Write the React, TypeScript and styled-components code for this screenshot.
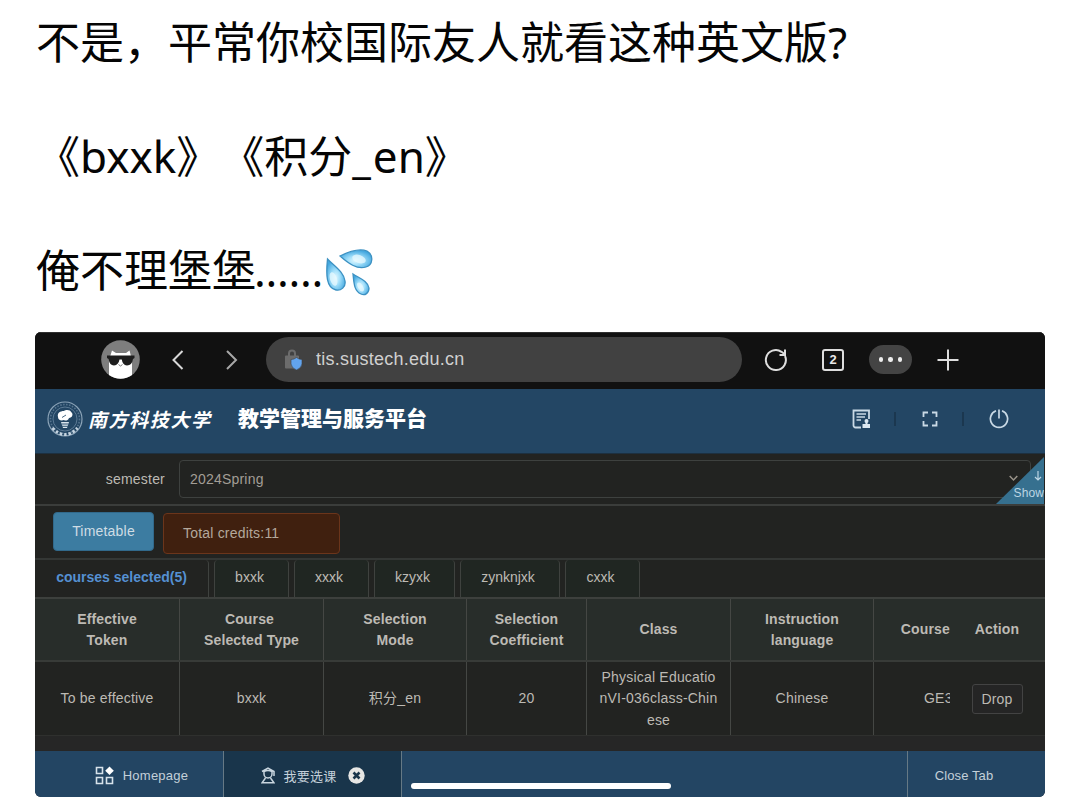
import React from "react";
import styled, { createGlobalStyle } from "styled-components";

const ui = `"Liberation Sans", "Noto Sans CJK SC", sans-serif`;

const Global = createGlobalStyle`
  * { box-sizing: border-box; }
  body { margin: 0; background: #fff; overflow: hidden; }
`;

const Page = styled.main`
  width: 1080px;
  height: 797px;
  overflow: hidden;
  display: flex;
  flex-direction: column;
  background: #fff;
`;

const Post = styled.section`
  height: 332px;
  flex: none;
  padding: 0 0 0 36px;
  font: 44px "Noto Sans", "Noto Sans CJK SC", sans-serif;
  text-spacing-trim: space-all;
  color: #050505;
`;

const PostLine = styled.p<{ $h: number }>`
  margin: 0;
  height: ${(p) => p.$h}px;
  line-height: 84px;
  display: flex;
  white-space: nowrap;
`;

const Underscore = styled.span`
  font-weight: 600;
  letter-spacing: 2px;
`;

const Ellipsis = styled.span`
  margin-left: -2px;
  letter-spacing: -0.3px;
`;

const Drops = styled.svg`
  margin: 20px 0 0 3px;
  flex: none;
`;

const Device = styled.section`
  width: 1010px;
  height: 465px;
  margin-left: 35px;
  flex: none;
  display: flex;
  flex-direction: column;
  border-radius: 6px;
  overflow: hidden;
  background: #262626;
  font-family: ${ui};
  color: #bdbab4;
`;

const BrowserBar = styled.div`
  height: 57px;
  flex: none;
  display: flex;
  align-items: center;
  background: #111;
  padding: 0 0 3px 66px;
  border-top: 1px solid #303030;
`;

const Icon = styled.svg<{ $l?: number }>`
  flex: none;
  display: block;
  margin-left: ${(p) => p.$l ?? 0}px;
`;

const Address = styled.div`
  width: 476px;
  height: 45px;
  margin-left: 27px;
  padding-left: 17px;
  border-radius: 23px;
  background: #414141;
  display: flex;
  align-items: center;
  gap: 11px;
  font-size: 18px;
  letter-spacing: 0.25px;
  color: #d0d0d0;
`;

const TabCount = styled.div`
  width: 22px;
  height: 22px;
  margin-left: 34px;
  border: 2px solid #dedede;
  border-radius: 3px;
  color: #e8e8e8;
  font: bold 13px/18px ${ui};
  text-align: center;
`;

const More = styled.div`
  width: 43px;
  height: 29px;
  margin-left: 25px;
  border-radius: 15px;
  background: #444;
  display: flex;
  align-items: center;
  justify-content: center;
  gap: 5px;
`;

const Dot = styled.i`
  width: 4.5px;
  height: 4.5px;
  border-radius: 50%;
  background: #eee;
`;

const SiteHeader = styled.header`
  height: 65px;
  flex: none;
  display: flex;
  align-items: center;
  background: #234664;
  padding: 0 36px 5px 12px;
  border-bottom: 1px solid #1d3040;
`;

const School = styled.span`
  margin-left: 5px;
  width: 125px;
  font: italic 700 19px/24px "Noto Sans CJK SC", sans-serif;
  letter-spacing: 1.6px;
  color: #fff;
  white-space: nowrap;
`;

const Title = styled.h1`
  margin: -3px 0 0 25px;
  flex: 1;
  font: 900 21px/24px "Noto Sans CJK SC", sans-serif;
  color: #fff;
  white-space: nowrap;
`;

const Divider = styled.i<{ $l: number; $r: number }>`
  width: 2px;
  height: 14px;
  margin: 0 ${(p) => p.$r}px 0 ${(p) => p.$l}px;
  background: #1b374f;
`;

const Filter = styled.div`
  height: 52px;
  flex: none;
  display: flex;
  align-items: center;
  padding-bottom: 1px;
  background: #222321;
  border-bottom: 2px solid #3b3d3b;
  position: relative;
`;

const Label = styled.label`
  width: 130px;
  text-align: right;
  font-size: 14px;
  letter-spacing: 0.2px;
`;

const Select = styled.div`
  width: 852px;
  height: 38px;
  margin-left: 14px;
  padding: 0 12px 0 10px;
  border: 1px solid #3e413f;
  border-radius: 4px;
  display: flex;
  align-items: center;
  justify-content: space-between;
  font-size: 14px;
  letter-spacing: 0.2px;
  color: #a29e96;
`;

const Ribbon = styled.div`
  position: absolute;
  right: 1px;
  top: 3px;
  width: 48px;
  height: 47px;
  background: #36708f;
  clip-path: polygon(100% 0, 100% 100%, 0 100%);
  color: #bcd6e4;
  font-size: 12px;
  line-height: 14px;
  letter-spacing: 0.1px;
  display: flex;
  flex-direction: column;
  align-items: flex-end;
  padding-top: 14px;
  gap: 5px;
`;

const Summary = styled.div`
  height: 52px;
  flex: none;
  display: flex;
  align-items: flex-start;
  gap: 9px;
  padding: 6px 0 0 18px;
  background: #222321;
`;

const TimetableButton = styled.button`
  width: 101px;
  height: 39px;
  padding: 0 0 2px;
  border: 1px solid #31698b;
  border-radius: 4px;
  background: #3c7ca1;
  color: #cfdde5;
  font: 14px ${ui};
  letter-spacing: 0.2px;
`;

const Credits = styled.div`
  width: 177px;
  height: 41px;
  margin-top: 1px;
  padding-left: 19px;
  border: 1px solid #6b351b;
  border-radius: 4px;
  background: #40200f;
  font-size: 14px;
  line-height: 39px;
  letter-spacing: 0.2px;
  color: #b4a89c;
`;

const Tabs = styled.nav`
  height: 41px;
  flex: none;
  display: flex;
  gap: 5px;
  background: #222321;
  border-top: 2px solid #343735;
  border-bottom: 2px solid #3d403d;
`;

const Tab = styled.div<{ $w: number; $active?: boolean; $shift: number }>`
  width: ${(p) => p.$w}px;
  padding-right: ${(p) => p.$shift}px;
  border: solid #3f423f;
  border-width: 0 1px 0 ${(p) => (p.$active ? 0 : 1)}px;
  border-radius: 4px 4px 0 0;
  background: ${(p) => (p.$active ? "#222321" : "#202622")};
  color: ${(p) => (p.$active ? "#5590d2" : "#bdbab4")};
  font-weight: ${(p) => (p.$active ? "bold" : "normal")};
  font-size: 14px;
  line-height: 34px;
  text-align: center;
  white-space: nowrap;
`;

const Row = styled.div<{ $head?: boolean }>`
  height: ${(p) => (p.$head ? 63 : 74)}px;
  flex: none;
  display: grid;
  grid-template-columns: 145px 144px 143px 120px 144px 143px 76px 1fr;
  background: ${(p) => (p.$head ? "#282d2a" : "#222321")};
  border-bottom: ${(p) => (p.$head ? "2px solid #383b38" : "1px solid #2f302e")};
  font-size: 14px;
  font-weight: ${(p) => (p.$head ? "bold" : "normal")};
  line-height: 21.5px;
  letter-spacing: ${(p) => (p.$head ? 0.15 : 0.2)}px;
`;

const Cell = styled.div<{ $plain?: boolean; $clip?: boolean }>`
  display: flex;
  align-items: center;
  justify-content: ${(p) => (p.$clip ? "flex-end" : "center")};
  padding: 1px ${(p) => (p.$plain ? 1 : 0)}px 0 0;
  text-align: center;
  white-space: pre;
  border-right: ${(p) => (p.$plain || p.$clip ? "0" : "1px solid #454744")};
`;

const ClippedCode = styled.span`
  width: 26px;
  overflow: hidden;
  text-align: left;
`;

const DropButton = styled.button`
  width: 51px;
  height: 30px;
  padding: 0;
  border: 1px solid #434343;
  border-radius: 3px;
  background: #252525;
  color: #bdbab4;
  font: 14px ${ui};
  letter-spacing: 0.2px;
`;

const Footer = styled.footer`
  height: 46px;
  margin-top: auto;
  display: flex;
  background: #234563;
  color: #c4d0d9;
  font-size: 13px;
`;

const FootTab = styled.div<{ $w: number; $active?: boolean; $gap: number }>`
  width: ${(p) => p.$w}px;
  display: flex;
  align-items: center;
  justify-content: center;
  gap: ${(p) => p.$gap}px;
  padding-top: 3px;
  letter-spacing: 0.25px;
  background: ${(p) => (p.$active ? "#19354b" : "transparent")};
  border-right: 1px solid #667985;
`;

const HomeZone = styled.div`
  flex: 1;
  padding: 32px 0 0 9px;
`;

const HomeIndicator = styled.div`
  width: 260px;
  height: 6px;
  border-radius: 3px;
  background: #fff;
`;

const CloseTab = styled.div`
  width: 138px;
  padding: 2px 25px 0 0;
  border-left: 1px solid #667985;
  line-height: 46px;
  text-align: center;
  letter-spacing: 0.1px;
`;

const tabs = [
  { name: "courses selected(5)", w: 174, shift: 0 },
  { name: "bxxk", w: 75, shift: 4 },
  { name: "xxxk", w: 75, shift: 5 },
  { name: "kzyxk", w: 81, shift: 4 },
  { name: "zynknjxk", w: 100, shift: 4 },
  { name: "cxxk", w: 75, shift: 4 },
];

const heads = [
  "Effective\nToken",
  "Course \nSelected Type",
  "Selection\nMode",
  "Selection\nCoefficient",
  "Class",
  "Instruction\nlanguage",
];

const values = [
  "To be effective",
  "bxxk",
  "积分_en",
  "20",
  "Physical Educatio\nnVI-036class-Chin\nese",
  "Chinese",
];

const SweatDrops = () => (
  <Drops width="50" height="50" viewBox="0 0 50 50">
    <defs>
      <radialGradient id="water" cx="48%" cy="60%" r="58%">
        <stop offset="0" stopColor="#e2f8ff" />
        <stop offset=".4" stopColor="#a5e1fb" />
        <stop offset="1" stopColor="#43a7df" />
      </radialGradient>
    </defs>
    <g fill="url(#water)" stroke="#3c91c2" strokeWidth="1.3">
      <path d="M14 8 C22 4 33 0 41 3 C48 7 47 17 40 19 C31 22 22 15 14 8Z" />
      <path d="M1.500 11 C8 18 18 24 19 33 C20 39 15 43 10 42 C0 40 0 26 1.500 11Z" />
      <path d="M27 26 C33 30 42 33 43 40 C43 45 39 48 35 46 C28 43 28 35 27 26Z" />
    </g>
    <g fill="#e9faff" opacity=".75">
      <ellipse cx="33" cy="11" rx="7" ry="4" transform="rotate(20 33 11)" />
      <ellipse cx="7.500" cy="31" rx="3.500" ry="7" transform="rotate(-18 7.500 31)" />
      <ellipse cx="34.500" cy="39" rx="2.500" ry="5" transform="rotate(-30 34.500 39)" />
    </g>
  </Drops>
);

const Avatar = () => (
  <Icon width="39" height="39" viewBox="0 0 39 39">
    <circle cx="19.500" cy="19.500" r="19.300" fill="#7e7e7e" />
    <path
      d="M8 35 V20 L11 10.500 L15 13 H25 L28.500 10.500 L31 20 V35 Q26 38.700 19.500 38.700 Q13 38.700 8 35Z"
      fill="#fff"
    />
    <path
      d="M6 15.500 H33.500 V18 L32 19 Q31 25.500 26 25.500 Q21.500 25 20.800 19.500 H18.500 Q17.500 25 13 25.500 Q8.500 25.500 7.600 19 L6 18Z"
      fill="#1d1d1d"
    />
    <path d="M17.500 24.500 l2 1.500 2-1.500" stroke="#777" fill="none" />
  </Icon>
);

const Seal = () => (
  <Icon width="36" height="38" viewBox="0 0 36 38" fill="none">
    <circle cx="18" cy="19" r="17" stroke="#8ba3b7" strokeWidth="1.200" />
    <circle cx="18" cy="19" r="14.500" stroke="#56748e" strokeWidth="1.600" strokeDasharray="1.500 1.500" />
    <circle cx="18" cy="19" r="12" stroke="#6a879f" strokeWidth=".8" />
    <path
      d="M11 17 C10 13 13 11 17 11 C19 9 24 10 24 12 C27 14 25 18 22 18 C21 21 18 21 17 20 C14 21 11 20 11 17Z"
      fill="#fff"
    />
    <path d="M15 17.500 l4-2.500" stroke="#476681" />
    <path d="M14 22 h8 l-2 6 h-4z" fill="#d9e4ec" />
    <path d="M14.500 24 h7 M15 26.300 h6" stroke="#315574" />
    <path d="M5.500 28 Q18 41 30.500 28" stroke="#c5d4e0" strokeWidth="3" strokeDasharray="2.500 2" />
  </Icon>
);

export default function App() {
  return (
    <Page>
      <Global />
      <Post>
        <PostLine $h={114}>不是，平常你校国际友人就看这种英文版?</PostLine>
        <PostLine $h={114}>
          《bxxk》《积分<Underscore>_</Underscore>en》
        </PostLine>
        <PostLine $h={104}>
          俺不理堡堡<Ellipsis>......</Ellipsis>
          <SweatDrops />
        </PostLine>
      </Post>

      <Device>
        <BrowserBar>
          <Avatar />
          <Icon $l={31} width="14" height="22" viewBox="0 0 14 22" fill="none" stroke="#d8d8d8" strokeWidth="2">
            <path d="M11.500 2 2.500 11 11.500 20" />
          </Icon>
          <Icon $l={40} width="14" height="22" viewBox="0 0 14 22" fill="none" stroke="#a8a8a8" strokeWidth="2">
            <path d="M2 2 11 11 2 20" />
          </Icon>
          <Address>
            <Icon width="22" height="22" viewBox="0 0 22 22">
              <path d="M6 8 V4.500 a3 3 0 0 1 6 0 V8" fill="none" stroke="#6c6c6c" strokeWidth="2" />
              <rect x="2" y="6.500" width="14" height="13" rx="1" fill="#6c6c6c" />
              <path
                d="M13.500 8.500 Q16 10.500 19 10.500 V15 Q18.500 19 13.500 21 Q8.500 19 8 15 V10.500 Q11 10.500 13.500 8.500Z"
                fill="#62a4ee"
                stroke="#414141"
                strokeWidth=".6"
              />
            </Icon>
            tis.sustech.edu.cn
          </Address>
          <Icon $l={22} width="24" height="24" viewBox="0 0 24 24" fill="none" stroke="#dedede" strokeWidth="2">
            <path d="M21 8 A10 10 0 1 1 17.500 3.800 L20.500 6" />
            <path d="M21 1.500 V7 H15.500" />
          </Icon>
          <TabCount>2</TabCount>
          <More>
            <Dot />
            <Dot />
            <Dot />
          </More>
          <Icon $l={25} width="22" height="22" viewBox="0 0 22 22" stroke="#dedede" strokeWidth="2">
            <path d="M11 0.500V21.500M0.500 11H21.500" />
          </Icon>
        </BrowserBar>

        <SiteHeader>
          <Seal />
          <School>南方科技大学</School>
          <Title>教学管理与服务平台</Title>
          <Icon width="19" height="20" viewBox="0 0 19 20" fill="none" stroke="#c9d9e5" strokeWidth="1.800">
            <path d="M9 18.500 H3.500 a2 2 0 0 1-2-2 V1.500 H17 V10" />
            <path d="M4.500 5 H14 M4.500 8 H13 M4.500 11 H9" strokeWidth="1.400" />
            <circle cx="14.500" cy="12" r="2" fill="#dce8f1" stroke="none" />
            <path d="M13.500 12 h2 v3 h2.500 v4 h-7.500 v-4 h3z" fill="#dce8f1" stroke="none" />
          </Icon>
          <Divider $l={23} $r={26} />
          <Icon width="16" height="16" viewBox="0 0 16 16" fill="none" stroke="#c9d9e5" strokeWidth="1.800">
            <path d="M1.500 6 V1.500 H6 M10 1.500 H14.500 V6 M14.500 10 V14.500 H10 M6 14.500 H1.500 V10" />
          </Icon>
          <Divider $l={24} $r={25} />
          <Icon width="20" height="20" viewBox="0 0 20 20" fill="none" stroke="#c9d9e5" strokeWidth="1.700">
            <path d="M7 1.800 A8.600 8.600 0 1 0 13 1.800 M10 0.500 V9.500" />
          </Icon>
        </SiteHeader>

        <Filter>
          <Label>semester</Label>
          <Select>
            2024Spring
            <Icon width="9" height="7" viewBox="0 0 9 7" fill="none" stroke="#999389" strokeWidth="1.500">
              <path d="M.7 1 4.500 5 8.300 1" />
            </Icon>
          </Select>
          <Ribbon>
            <Icon width="12" height="10" viewBox="0 0 12 10" fill="none" stroke="#bcd6e4" strokeWidth="1.200">
              <path d="M6 0V9M3 6 6 9 9 6" />
            </Icon>
            Show
          </Ribbon>
        </Filter>

        <Summary>
          <TimetableButton>Timetable</TimetableButton>
          <Credits>Total credits:11</Credits>
        </Summary>

        <Tabs>
          {tabs.map((t, i) => (
            <Tab key={t.name} $w={t.w} $shift={t.shift} $active={i === 0}>
              {t.name}
            </Tab>
          ))}
        </Tabs>

        <Row $head>
          {heads.map((h) => (
            <Cell key={h}>{h}</Cell>
          ))}
          <Cell $clip>Course</Cell>
          <Cell $plain>Action</Cell>
        </Row>
        <Row>
          {values.map((v) => (
            <Cell key={v}>{v}</Cell>
          ))}
          <Cell $clip>
            <ClippedCode>GE3</ClippedCode>
          </Cell>
          <Cell $plain>
            <DropButton>Drop</DropButton>
          </Cell>
        </Row>

        <Footer>
          <FootTab $w={189} $gap={8}>
            <Icon $l={25} width="20" height="20" viewBox="0 0 20 20" fill="none" stroke="#d7e2ea" strokeWidth="1.600">
              <path d="M1.500 1.500h6v6h-6zM1.500 11.500h6v6h-6zM11.500 11.500h6v6h-6z" />
              <path d="M14.500 0.500 18.800 4.800 14.500 9.100 10.200 4.800z" fill="#fff" stroke="none" />
            </Icon>
            Homepage
          </FootTab>
          <FootTab $w={178} $active $gap={8}>
            <Icon $l={1} width="14" height="17" viewBox="0 0 14 17" fill="none" stroke="#c9d6df" strokeWidth="1.500">
              <path d="M1 4.500 7 1 13 4.500V9M3 4.500V7a4 4 0 0 0 8 0V4.500Q7 2.500 3 4.500M4.500 11 1 15.800H13L9.500 11" />
            </Icon>
            我要选课
            <Icon $l={3} width="17" height="17" viewBox="0 0 17 17">
              <circle cx="8.500" cy="8.500" r="8.200" fill="#e6e6e4" />
              <path d="M5.500 5.500 11.500 11.500M11.500 5.500 5.500 11.500" stroke="#19354b" strokeWidth="2.600" />
            </Icon>
          </FootTab>
          <HomeZone>
            <HomeIndicator />
          </HomeZone>
          <CloseTab>Close Tab</CloseTab>
        </Footer>
      </Device>
    </Page>
  );
}
